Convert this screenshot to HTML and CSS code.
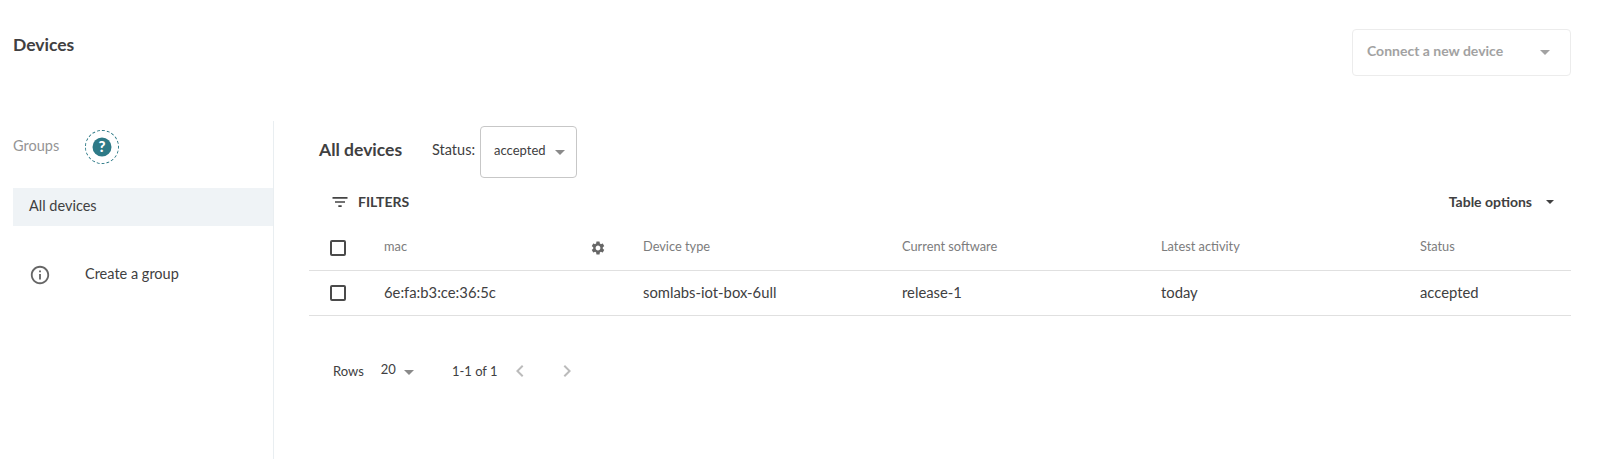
FILE: index.html
```html
<!DOCTYPE html>
<html lang="en">
<head>
    <meta charset="UTF-8">
    <meta name="viewport" content="width=device-width, initial-scale=1.0">
    <title>Devices</title>
    <link rel="stylesheet" href="styles.css">
</head>
<body>
    <div class="page-header">
        <h1>Devices</h1>
        <button class="connect-btn">
            <span class="connect-label">Connect a new device</span>
            <span class="caret caret-light"></span>
        </button>
    </div>
    <div class="content">
        <aside class="sidebar">
            <div class="groups-head">
                <span class="groups-title">Groups</span>
                <span class="help-ring">
                    <svg width="20" height="20" viewBox="0 0 20 20">
                        <circle cx="10" cy="10" r="9.5" fill="#2e7a87"/>
                        <text x="10" y="15" text-anchor="middle" class="help-mark">?</text>
                    </svg>
                </span>
            </div>
            <div class="group-item"><span>All devices</span></div>
            <div class="create-group">
                <svg class="info-icon" width="22" height="22" viewBox="0 0 24 24">
                    <path fill="#666" d="M11 7h2v2h-2zm0 4h2v6h-2zm1-9C6.48 2 2 6.48 2 12s4.48 10 10 10 10-4.48 10-10S17.52 2 12 2zm0 18c-4.41 0-8-3.59-8-8s3.59-8 8-8 8 3.59 8 8-3.59 8-8 8z"/>
                </svg>
                <span class="create-label">Create a group</span>
            </div>
        </aside>
        <main class="main">
            <div class="title-row">
                <h2>All devices</h2>
                <span class="status-label">Status:</span>
                <div class="status-select">
                    <span class="status-value">accepted</span>
                    <span class="caret"></span>
                </div>
            </div>
            <div class="toolbar">
                <div class="filters">
                    <svg width="20" height="20" viewBox="0 0 24 24">
                        <path fill="#444" d="M10 18h4v-2h-4v2zM3 6v2h18V6H3zm3 7h12v-2H6v2z"/>
                    </svg>
                    <span class="filters-label">FILTERS</span>
                </div>
                <div class="table-options">
                    <span>Table options</span>
                    <span class="caret caret-dark"></span>
                </div>
            </div>
            <div class="table">
                <div class="row row-head">
                    <div class="cell-check"><span class="checkbox"></span></div>
                    <div class="cell cell-mac">
                        <span>mac</span>
                        <svg class="gear" width="16" height="16" viewBox="0 0 24 24">
                            <path fill="#666" d="M19.14 12.94c.04-.3.06-.61.06-.94 0-.32-.02-.64-.07-.94l2.03-1.58a.49.49 0 0 0 .12-.61l-1.92-3.32a.488.488 0 0 0-.59-.22l-2.39.96c-.5-.38-1.03-.7-1.62-.94l-.36-2.54a.484.484 0 0 0-.48-.41h-3.84c-.24 0-.43.17-.47.41l-.36 2.54c-.59.24-1.13.57-1.62.94l-2.39-.96c-.22-.08-.47 0-.59.22L2.74 8.87c-.12.21-.08.47.12.61l2.03 1.58c-.05.3-.09.63-.09.94s.02.64.07.94l-2.03 1.58a.49.49 0 0 0-.12.61l1.92 3.32c.12.22.37.29.59.22l2.39-.96c.5.38 1.03.7 1.62.94l.36 2.54c.05.24.24.41.48.41h3.84c.24 0 .44-.17.47-.41l.36-2.54c.59-.24 1.13-.56 1.62-.94l2.39.96c.22.08.47 0 .59-.22l1.92-3.32c.12-.22.07-.47-.12-.61l-2.01-1.58zM12 15.6c-1.98 0-3.6-1.62-3.6-3.6s1.62-3.6 3.6-3.6 3.6 1.62 3.6 3.6-1.62 3.6-3.6 3.6z"/>
                        </svg>
                    </div>
                    <div class="cell">Device type</div>
                    <div class="cell">Current software</div>
                    <div class="cell">Latest activity</div>
                    <div class="cell">Status</div>
                </div>
                <div class="row">
                    <div class="cell-check"><span class="checkbox"></span></div>
                    <div class="cell">6e:fa:b3:ce:36:5c</div>
                    <div class="cell">somlabs-iot-box-6ull</div>
                    <div class="cell">release-1</div>
                    <div class="cell">today</div>
                    <div class="cell">accepted</div>
                </div>
            </div>
            <div class="pagination">
                <span class="rows-label">Rows</span>
                <span class="rows-count">20</span>
                <span class="caret"></span>
                <span class="page-range">1-1 of 1</span>
                <svg class="page-prev" width="24" height="24" viewBox="0 0 24 24">
                    <path fill="#bbb" d="M15.41 7.41 14 6l-6 6 6 6 1.41-1.41L10.83 12z"/>
                </svg>
                <svg class="page-next" width="24" height="24" viewBox="0 0 24 24">
                    <path fill="#bbb" d="M10 6 8.59 7.41 13.17 12l-4.58 4.59L10 18l6-6z"/>
                </svg>
            </div>
        </main>
    </div>
</body>
</html>
```

FILE: styles.css
```css
body {
    font-family: Lato, sans-serif;
    font-size: 14.5px;
    color: #404041;
    background: #fff;
    margin: 0;
    height: 459px;
    overflow: hidden;
}
h1, h2 {
    margin: 0;
    font-weight: 700;
    font-size: 17.5px;
}
.page-header {
    display: flex;
    justify-content: space-between;
    align-items: flex-start;
    height: 121px;
    padding: 0 42px 0 13px;
}
.page-header h1 {
    margin-top: 35px;
    line-height: 20px;
}
.connect-btn {
    display: flex;
    align-items: center;
    justify-content: space-between;
    width: 219px;
    height: 47px;
    margin-top: 29px;
    padding: 0 20px 0 14px;
    background: #fff;
    border: 1px solid #ececec;
    border-radius: 4px;
    font-family: inherit;
    font-size: 14px;
    font-weight: 700;
    color: #a2a2a2;
}
.connect-label {
    padding-bottom: 4px;
}
.caret {
    display: inline-block;
    width: 0;
    height: 0;
    border-left: 5px solid transparent;
    border-right: 5px solid transparent;
    border-top: 5px solid #8a8a8a;
}
.caret-light {
    border-top-color: #a2a2a2;
}
.caret-dark {
    border-left-width: 4px;
    border-right-width: 4px;
    border-top-width: 4px;
    border-top-color: #404041;
}
.content {
    display: flex;
    margin-left: 13px;
    height: 338px;
}
.sidebar {
    width: 260px;
    flex-shrink: 0;
    border-right: 1px solid #e9eef1;
}
.groups-head {
    display: flex;
    align-items: center;
    gap: 26px;
    height: 34px;
    margin-top: 9px;
}
.groups-title {
    color: #949495;
    padding-bottom: 4px;
}
.help-ring {
    display: flex;
    align-items: center;
    justify-content: center;
    width: 32px;
    height: 32px;
    border: 1px dashed #2e7a87;
    border-radius: 50%;
}
.help-mark {
    font-family: Lato, sans-serif;
    font-size: 15px;
    font-weight: 900;
    fill: #fff;
}
.group-item {
    display: flex;
    align-items: center;
    height: 38px;
    margin-top: 24px;
    padding-left: 16px;
    background: #eff3f6;
}
.group-item span {
    padding-bottom: 4px;
}
.create-group {
    display: flex;
    align-items: center;
    gap: 34px;
    margin-top: 37px;
    padding-left: 16px;
    height: 24px;
}
.create-label {
    padding-bottom: 4px;
}
.main {
    flex: 1;
    padding: 5px 42px 0 35px;
    min-width: 0;
}
.title-row {
    display: flex;
    align-items: center;
    height: 52px;
    padding-left: 10px;
}
.title-row h2 {
    width: 113px;
    padding-bottom: 6px;
}
.status-label {
    margin-right: 5px;
    padding-bottom: 6px;
}
.status-select {
    display: flex;
    align-items: center;
    gap: 9px;
    width: 97px;
    height: 52px;
    padding-left: 13px;
    box-sizing: border-box;
    border: 1px solid #c7c7c7;
    border-radius: 4px;
    font-size: 13px;
}
.status-value {
    padding-bottom: 4px;
}
.toolbar {
    display: flex;
    align-items: center;
    justify-content: space-between;
    height: 48px;
}
.filters {
    display: flex;
    align-items: center;
    gap: 8px;
    padding-left: 21px;
    font-size: 14px;
    font-weight: 700;
}
.filters-label {
    padding-bottom: 2px;
}
.table-options {
    display: flex;
    align-items: center;
    gap: 14px;
    padding-right: 17px;
    font-size: 14px;
    font-weight: 700;
}
.table-options span:first-child {
    padding-bottom: 2px;
}
.row {
    display: grid;
    grid-template-columns: 75px repeat(4, 259px) 1fr;
    align-items: center;
    height: 44px;
    border-bottom: 1px solid #e0e0e0;
    font-size: 14.8px;
}
.row .cell {
    padding-bottom: 3px;
}
.row-head {
    color: #7c7c7d;
    font-size: 12.8px;
}
.row-head .cell {
    padding-bottom: 5px;
}
.row-head .gear {
    margin-top: 5px;
}
.cell-check {
    padding-left: 21px;
    display: flex;
}
.checkbox {
    width: 16px;
    height: 16px;
    box-sizing: border-box;
    border: 2px solid #4a4a4a;
    border-radius: 2px;
}
.cell-mac {
    display: flex;
    align-items: center;
    justify-content: space-between;
    padding-right: 37px;
}
.pagination {
    display: flex;
    align-items: center;
    height: 24px;
    margin-top: 43px;
    padding-left: 24px;
    font-size: 13px;
}
.pagination .caret {
    margin-top: 2px;
}
.rows-count {
    margin-left: 17px;
    margin-right: 8px;
    padding-bottom: 4px;
}
.page-range {
    margin-left: 38px;
}
.page-prev {
    margin-left: 10px;
}
.page-next {
    margin-left: 23px;
}
```
